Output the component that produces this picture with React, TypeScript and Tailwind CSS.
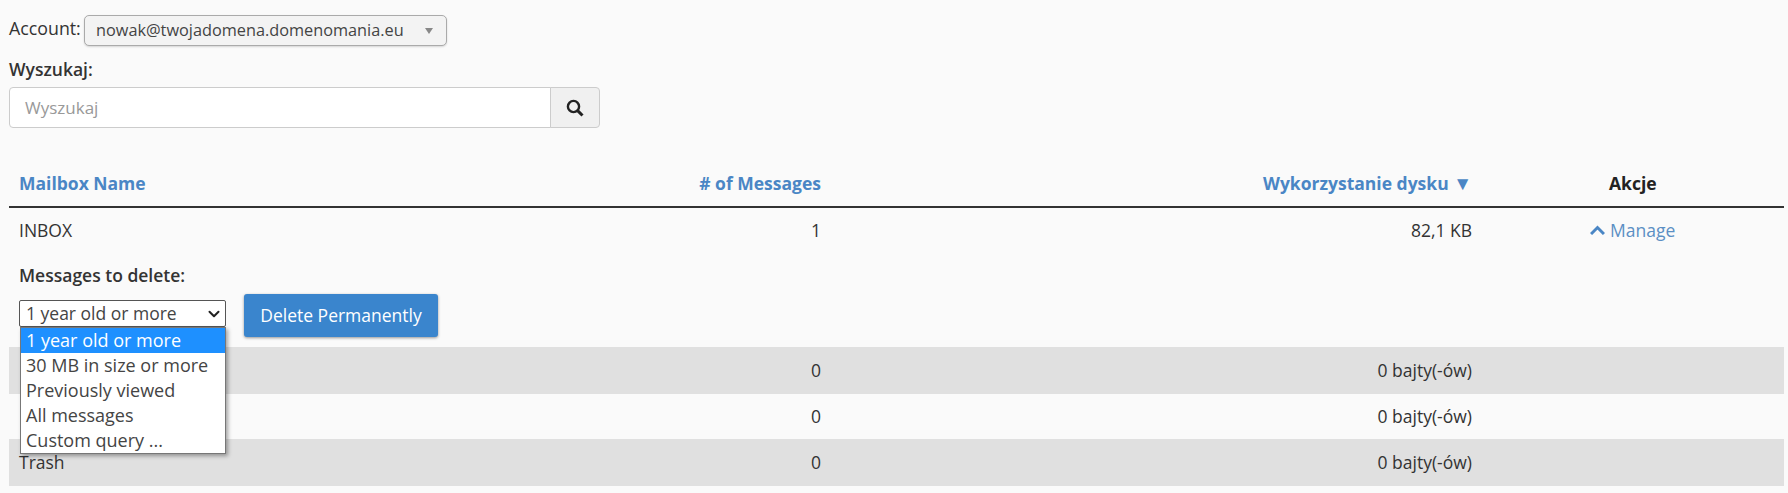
import React from 'react';
import { ChevronDown } from 'lucide-react';

// names of the first two rows are covered by the open select menu
const rows = [
    { name: '', count: 0, size: '0 bajty(-ów)', cls: 'flex items-center h-[47px] bg-[#e0e0e0]' },
    { name: '', count: 0, size: '0 bajty(-ów)', cls: 'flex items-center h-[45px]' },
    { name: 'Trash', count: 0, size: '0 bajty(-ów)', cls: 'flex items-center h-[47px] bg-[#e0e0e0]' },
];

const options = ['1 year old or more', '30 MB in size or more', 'Previously viewed', 'All messages', 'Custom query ...'];

const App: React.FC = () => {
    return (
        <div className="h-[493px] overflow-hidden bg-[#fafafa] pl-[9px] pr-[4px] pt-[15px] text-[17.5px] text-[#333] font-['Open_Sans',sans-serif]">
            {/* Account */}
            <div className="flex items-center h-[31px]">
                <span className="w-[75px] text-[17.8px] leading-[24px] -mt-[5px] text-[#333] whitespace-nowrap">Account:</span>
                <div className="flex items-center justify-between w-[363px] h-[31px] pl-[11px] pr-[13px] border border-[#aaa] rounded-[5px] bg-[#f3f3f3] text-[16.3px] text-[#444] shadow-[0_1px_2px_rgba(0,0,0,0.15)]">
                    <span>nowak@twojadomena.domenomania.eu</span>
                    <span className="w-0 h-0 border-x-[4px] border-x-transparent border-t-[6px] border-t-[#888]" />
                </div>
            </div>

            {/* Search */}
            <div className="mt-[12px] font-semibold leading-[22px]">Wyszukaj:</div>
            <div className="flex w-[591px] h-[41px] mt-[7px]">
                <div className="flex flex-1 items-center px-[15px] pt-[1px] bg-white border border-[#ccc] rounded-l-[4px] text-[17px] text-[#999]">Wyszukaj</div>
                <div className="flex items-center justify-center w-[50px] -ml-px bg-[#f0f0f0] border border-[#ccc] rounded-r-[4px]">
                    <svg width="18" height="18" viewBox="0 0 18 18" fill="none" stroke="#222">
                        <circle cx="7.5" cy="7.5" r="5.6" strokeWidth="2.4" />
                        <line x1="11.6" y1="11.6" x2="16.5" y2="16.5" strokeWidth="3" />
                    </svg>
                </div>
            </div>

            {/* Table */}
            <div className="mt-[38px]">
                <div className="flex items-center h-[42px] pb-[5px] border-b-2 border-[#333] font-bold text-[#4a86c5]">
                    <div className="w-[700px] pl-[10px]">Mailbox Name</div>
                    <div className="w-[112px] flex justify-end whitespace-nowrap"># of Messages</div>
                    <div className="w-[651px] text-right">
                        Wykorzystanie dysku <span className="text-[19px] leading-none">▼</span>
                    </div>
                    <div className="flex-1 pl-[137px] font-bold text-[#222]">Akcje</div>
                </div>

                <div className="flex items-center h-[44px]">
                    <div className="w-[700px] pl-[10px]">INBOX</div>
                    <div className="w-[112px] text-right">1</div>
                    <div className="w-[651px] text-right">82,1 KB</div>
                    <div className="flex flex-1 items-center pl-[118px] text-[#5b8fc4]">
                        <svg width="15" height="10" viewBox="0 0 15 10" fill="none" stroke="#4a86c5" strokeWidth="3" className="mr-[5px]">
                            <polyline points="1,9 7.5,2.5 14,9" />
                        </svg>
                        Manage
                    </div>
                </div>

                {/* Delete form, with the open select menu over it */}
                <div className="relative h-[95px] pl-[10px]">
                    <div className="pt-[12px] font-semibold leading-[22px]">Messages to delete:</div>
                    <div className="flex items-start mt-[8px]">
                        <div className="flex items-center justify-between w-[207px] h-[27px] mt-[6px] pl-[6px] pr-[2px] bg-white border border-[#555] rounded-[2px] text-[#444]">
                            <span>1 year old or more</span>
                            <ChevronDown className="w-[18px] h-[18px] text-[#222]" strokeWidth={2.7} />
                        </div>
                        <div className="flex items-center justify-center w-[194px] h-[43px] ml-[18px] bg-[#3a85cd] rounded-[3px] text-white shadow-[0_1px_3px_rgba(0,0,0,0.4)]">
                            Delete Permanently
                        </div>
                    </div>
                    <div className="absolute left-[11px] top-[75px] z-10 w-[206px] bg-white border border-[#777] shadow-[2px_2px_4px_rgba(0,0,0,0.35)] text-[18px] text-[#444]">
                        {options.map((o, i) => (
                            <div key={o} className={i === 0 ? 'h-[25px] leading-[25px] pl-[5px] bg-[#1e90ff] text-white' : 'h-[25px] leading-[25px] pl-[5px]'}>
                                {o}
                            </div>
                        ))}
                    </div>
                </div>

                {rows.map((r, i) => (
                    <div key={i} className={r.cls}>
                        <div className="w-[700px] pl-[10px]">{r.name}</div>
                        <div className="w-[112px] text-right">{r.count}</div>
                        <div className="w-[651px] text-right">{r.size}</div>
                    </div>
                ))}
            </div>
        </div>
    );
};

export default App;
